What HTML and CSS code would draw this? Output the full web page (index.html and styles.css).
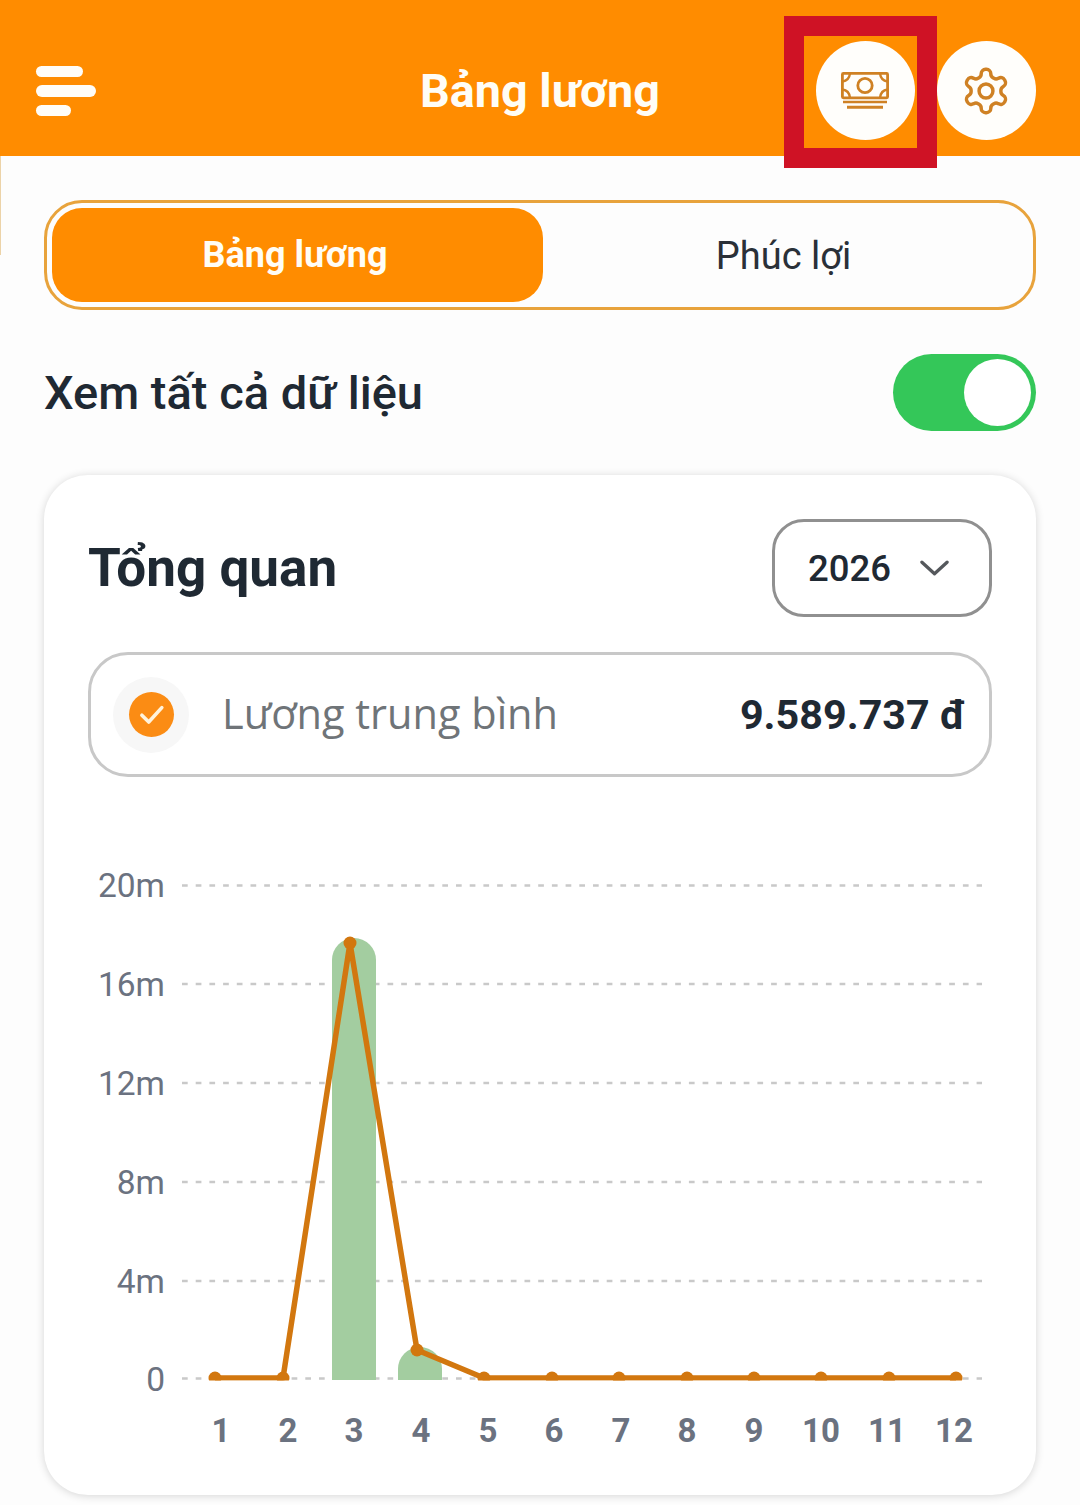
FILE: index.html
```html
<!DOCTYPE html>
<html lang="vi">
<head>
<meta charset="utf-8">
<title>Bảng lương</title>
<link rel="stylesheet" href="styles.css">
</head>
<body>
<header class="topbar">
  <button class="menu" aria-label="Menu">
    <span class="menu-bar bar-mid"></span>
    <span class="menu-bar bar-long"></span>
    <span class="menu-bar bar-short"></span>
  </button>
  <h1 class="topbar-title">Bảng lương</h1>
  <div class="topbar-actions">
    <span class="round-btn">
      <svg class="money-icon" viewBox="0 0 48 38" fill="none" stroke="#cf8124" stroke-width="2.800">
        <rect x="1.400" y="1.400" width="45.200" height="24.400" rx="1"/>
        <circle cx="24" cy="13.500" r="7.200"/>
        <path d="M1.400 9.500C5.500 9 8.500 6 9 1.400M46.600 9.500C42.500 9 39.500 6 39 1.400M1.400 17.500C5.500 18 8.500 21 9 25.800M46.600 17.500C42.500 18 39.500 21 39 25.800" stroke-width="2.400"/>
        <path d="M2 30H46" stroke-width="2.600"/>
        <path d="M6 35.200H42" stroke-width="3"/>
      </svg>
    </span>
    <span class="round-btn">
      <svg class="gear-icon" viewBox="0 0 24 24" fill="none" stroke="#cf8124" stroke-width="1.600" stroke-linecap="round" stroke-linejoin="round">
        <path d="M12.220 2h-.44a2 2 0 0 0-2 2v.18a2 2 0 0 1-1 1.730l-.43.25a2 2 0 0 1-2 0l-.15-.08a2 2 0 0 0-2.730.73l-.22.38a2 2 0 0 0 .73 2.730l.15.1a2 2 0 0 1 1 1.720v.51a2 2 0 0 1-1 1.740l-.15.09a2 2 0 0 0-.73 2.730l.22.38a2 2 0 0 0 2.730.73l.15-.08a2 2 0 0 1 2 0l.43.25a2 2 0 0 1 1 1.730V20a2 2 0 0 0 2 2h.44a2 2 0 0 0 2-2v-.18a2 2 0 0 1 1-1.730l.43-.25a2 2 0 0 1 2 0l.15.08a2 2 0 0 0 2.730-.73l.22-.39a2 2 0 0 0-.73-2.730l-.15-.08a2 2 0 0 1-1-1.740v-.5a2 2 0 0 1 1-1.740l.15-.09a2 2 0 0 0 .73-2.730l-.22-.38a2 2 0 0 0-2.730-.73l-.15.08a2 2 0 0 1-2 0l-.43-.25a2 2 0 0 1-1-1.730V4a2 2 0 0 0-2-2z"/>
        <circle cx="12" cy="12" r="3.200"/>
      </svg>
    </span>
  </div>
  <span class="highlight"></span>
</header>

<main class="content">
  <span class="edge-mark"></span>
  <div class="tabs">
    <span class="tab tab-active">Bảng lương</span>
    <span class="tab">Phúc lợi</span>
  </div>

  <div class="filter-row">
    <span class="filter-label">Xem tất cả dữ liệu</span>
    <span class="toggle"><span class="toggle-thumb"></span></span>
  </div>

  <section class="card">
    <div class="card-head">
      <h2 class="card-title">Tổng quan</h2>
      <div class="select">
        <span>2026</span>
        <svg class="chevron" viewBox="0 0 30 18" fill="none" stroke="#55585c" stroke-width="3.400" stroke-linecap="round" stroke-linejoin="round"><path d="M2 3l13 12L28 3"/></svg>
      </div>
    </div>

    <div class="metric">
      <span class="metric-halo">
        <span class="metric-check">
          <svg viewBox="0 0 24 24" fill="none" stroke="#fff3dc" stroke-width="2.600" stroke-linecap="round" stroke-linejoin="round"><path d="M5 12.500l5 5L19.500 7"/></svg>
        </span>
      </span>
      <span class="metric-label">Lương trung bình</span>
      <span class="metric-value">9.589.737 đ</span>
    </div>

    <svg class="chart" viewBox="44 777 992 718" role="img">
      <defs><clipPath id="plot"><rect x="44" y="777" width="992" height="603.500"/></clipPath></defs>
      <g class="grid">
        <path d="M182 885.500H982"/><path d="M182 984H982"/><path d="M182 1083H982"/>
        <path d="M182 1182H982"/><path d="M182 1281H982"/><path d="M182 1378.500H982"/>
      </g>
      <g class="y-axis">
        <text x="165" y="896.500">20m</text><text x="165" y="995.500">16m</text><text x="165" y="1094.500">12m</text>
        <text x="165" y="1193.500">8m</text><text x="165" y="1292.500">4m</text><text x="165" y="1391">0</text>
      </g>
      <g class="bars">
        <path d="M332 1380V960a22 22 0 0 1 44 0V1380z"/>
        <path d="M398 1380V1369a22 22 0 0 1 44 0V1380z"/>
      </g>
      <g clip-path="url(#plot)">
        <polyline class="line" points="215,1378 283,1378 350,943 417,1350 484,1378 552,1378 619,1378 687,1378 754,1378 821,1378 889,1378 956,1378"/>
        <g class="dots">
          <circle cx="215" cy="1378" r="6.500"/><circle cx="283" cy="1378" r="6.500"/><circle cx="350" cy="943" r="6.500"/>
          <circle cx="417" cy="1350" r="6.500"/><circle cx="484" cy="1378" r="6.500"/><circle cx="552" cy="1378" r="6.500"/>
          <circle cx="619" cy="1378" r="6.500"/><circle cx="687" cy="1378" r="6.500"/><circle cx="754" cy="1378" r="6.500"/>
          <circle cx="821" cy="1378" r="6.500"/><circle cx="889" cy="1378" r="6.500"/><circle cx="956" cy="1378" r="6.500"/>
        </g>
      </g>
      <g class="x-axis">
        <text x="221" y="1442">1</text><text x="288" y="1442">2</text><text x="354" y="1442">3</text>
        <text x="421" y="1442">4</text><text x="488" y="1442">5</text><text x="554" y="1442">6</text>
        <text x="621" y="1442">7</text><text x="687" y="1442">8</text><text x="754" y="1442">9</text>
        <text x="821" y="1442">10</text><text x="887" y="1442">11</text><text x="954" y="1442">12</text>
      </g>
    </svg>
  </section>
</main>
</body>
</html>
```
FILE: styles.css
```css
* { box-sizing: border-box; }

html, body {
  margin: 0;
  height: 1505px;
  overflow: hidden;
}

body {
  background: #fdfdfd;
  font-family: Roboto, "Liberation Sans", sans-serif;
  color: #1f2933;
}

.topbar {
  position: relative;
  display: grid;
  grid-template-columns: 1fr auto 1fr;
  align-items: center;
  height: 156px;
  padding: 41px 44px 16px;
  background: #ff8c00;
}

.menu {
  display: flex;
  flex-direction: column;
  width: 60px;
  margin-left: -8px;
  padding: 0;
  border: 0;
  background: none;
}

.menu-bar {
  display: block;
  background: #fffdf8;
  border-radius: 6px;
}

.bar-mid { width: 47px; height: 11px; }
.bar-long { width: 60px; height: 12px; margin-top: 8px; }
.bar-short { width: 35px; height: 11px; margin-top: 8px; }

.topbar-title {
  margin: 0;
  padding-top: 2px;
  font-size: 46.700px;
  font-weight: 700;
  line-height: 1;
  color: #fffdf6;
}

.topbar-actions {
  display: flex;
  justify-content: flex-end;
  gap: 22px;
}

.round-btn {
  display: flex;
  align-items: center;
  justify-content: center;
  width: 99px;
  height: 99px;
  border-radius: 50%;
  background: #fffefb;
}

.money-icon { width: 48px; height: 38px; margin-right: 1px; }
.gear-icon { width: 52px; height: 52px; margin-right: 2px; }

.highlight {
  position: absolute;
  left: 784px;
  top: 16px;
  width: 153px;
  height: 152px;
  border: 20px solid #cf1225;
}

.content {
  position: relative;
  padding: 44px 44px 0;
}

.edge-mark {
  position: absolute;
  left: 0;
  top: 0;
  width: 1px;
  height: 99px;
  background: #ecd3a8;
}

.tabs {
  display: flex;
  height: 110px;
  padding: 5px;
  border: 3px solid #e8a33c;
  border-radius: 38px;
}

.tab {
  display: flex;
  flex: 0 0 491px;
  align-items: center;
  justify-content: center;
  padding: 1px 10px 0 0;
  font-size: 38px;
  color: #2a3038;
}

.tab-active {
  padding: 0 5px 0 0;
  border-radius: 30px;
  background: #ff8c00;
  font-size: 36px;
  font-weight: 700;
  color: #fffdf6;
}

.filter-row {
  display: flex;
  align-items: center;
  justify-content: space-between;
  margin-top: 44px;
}

.filter-label {
  font-size: 47px;
  font-weight: 500;
  color: #1f2933;
}

.toggle {
  display: flex;
  justify-content: flex-end;
  align-items: center;
  width: 143px;
  height: 77px;
  padding-right: 5px;
  border-radius: 39px;
  background: #34c759;
}

.toggle-thumb {
  width: 67px;
  height: 67px;
  border-radius: 50%;
  background: #fff;
}

.card {
  height: 1020px;
  margin-top: 44px;
  border-radius: 44px;
  background: #fff;
  box-shadow: 0 1px 8px rgba(0, 0, 0, 0.16);
}

.card-head {
  display: flex;
  align-items: center;
  justify-content: space-between;
  padding: 44px 44px 0 44px;
}

.card-title {
  margin: 0;
  font-size: 53px;
  font-weight: 700;
  color: #1f2933;
}

.select {
  display: flex;
  align-items: center;
  gap: 29px;
  width: 220px;
  height: 98px;
  padding-left: 33px;
  border: 3px solid #909090;
  border-radius: 32px;
  font-size: 36.500px;
  font-weight: 500;
  color: #1f2933;
}

.chevron { width: 29px; height: 18px; }

.metric {
  display: flex;
  align-items: center;
  height: 125px;
  margin: 35px 44px 0;
  padding: 0 23px 0 22px;
  border: 3px solid #c8c8c8;
  border-radius: 40px;
}

.metric-halo {
  display: flex;
  align-items: center;
  justify-content: center;
  width: 76px;
  height: 76px;
  border-radius: 50%;
  background: #f7f7f7;
}

.metric-check {
  display: flex;
  width: 45px;
  height: 45px;
  padding: 6px;
  border-radius: 50%;
  background: #fb8c14;
}

.metric-label {
  flex: 1;
  margin-left: 33px;
  padding-bottom: 4px;
  font-family: "Open Sans", Roboto, sans-serif;
  font-size: 41.500px;
  color: #6f7478;
}

.metric-value {
  font-size: 41.300px;
  font-weight: 700;
  color: #1f2933;
}

.chart {
  display: block;
  width: 992px;
  height: 718px;
}

.grid path {
  fill: none;
  stroke: #c9c9c9;
  stroke-width: 2.500;
  stroke-dasharray: 5.700 8;
}

.y-axis text {
  font-size: 33.500px;
  fill: #6b7280;
  text-anchor: end;
}

.x-axis text {
  font-size: 33px;
  font-weight: 700;
  fill: #6b7280;
  text-anchor: middle;
}

.bars path { fill: #a3cda0; }

.line {
  fill: none;
  stroke: #d2770f;
  stroke-width: 5.500;
  stroke-linejoin: round;
}

.dots circle { fill: #d2770f; }
```
